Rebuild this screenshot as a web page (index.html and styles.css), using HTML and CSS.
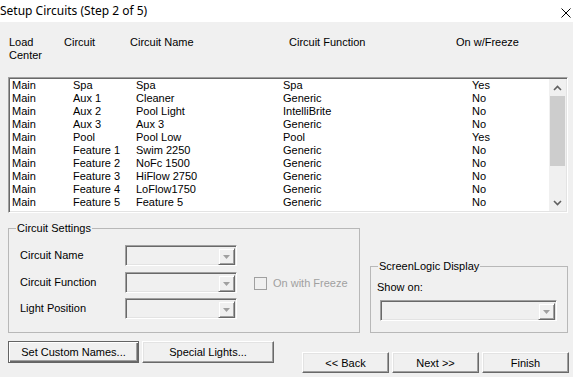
FILE: index.html
```html
<!DOCTYPE html>
<html>
<head>
<meta charset="utf-8">
<title>Setup Circuits</title>
<link rel="stylesheet" href="styles.css">
</head>
<body>
<div class="titlebar">
  <span class="title">Setup Circuits (Step 2 of 5)</span>
  <svg class="close" width="10" height="10" viewBox="0 0 10 10"><path d="M0.5 0.5 L9.5 9.5 M9.5 0.5 L0.5 9.5" stroke="#000" stroke-width="1" fill="none"/></svg>
</div>
<div class="dialog">
  <div class="headers">
    <span>Load<br>Center</span>
    <span>Circuit</span>
    <span>Circuit Name</span>
    <span>Circuit Function</span>
    <span>On w/Freeze</span>
  </div>
  <div class="listbox">
    <div class="rows">
      <div class="row"><span>Main</span><span>Spa</span><span>Spa</span><span>Spa</span><span>Yes</span></div>
      <div class="row"><span>Main</span><span>Aux 1</span><span>Cleaner</span><span>Generic</span><span>No</span></div>
      <div class="row"><span>Main</span><span>Aux 2</span><span>Pool Light</span><span>IntelliBrite</span><span>No</span></div>
      <div class="row"><span>Main</span><span>Aux 3</span><span>Aux 3</span><span>Generic</span><span>No</span></div>
      <div class="row"><span>Main</span><span>Pool</span><span>Pool Low</span><span>Pool</span><span>Yes</span></div>
      <div class="row"><span>Main</span><span>Feature 1</span><span>Swim 2250</span><span>Generic</span><span>No</span></div>
      <div class="row"><span>Main</span><span>Feature 2</span><span>NoFc 1500</span><span>Generic</span><span>No</span></div>
      <div class="row"><span>Main</span><span>Feature 3</span><span>HiFlow 2750</span><span>Generic</span><span>No</span></div>
      <div class="row"><span>Main</span><span>Feature 4</span><span>LoFlow1750</span><span>Generic</span><span>No</span></div>
      <div class="row"><span>Main</span><span>Feature 5</span><span>Feature 5</span><span>Generic</span><span>No</span></div>
      <div class="row"><span>Main</span><span>Feature 6</span><span>Feature 6</span><span>Generic</span><span>No</span></div>
    </div>
    <div class="scrollbar">
      <div class="sb-arrow"><svg width="9" height="6" viewBox="0 0 9 6"><path d="M1 5 L4.5 1.5 L8 5" stroke="#606060" stroke-width="1.6" fill="none"/></svg></div>
      <div class="sb-track"><div class="sb-thumb"></div></div>
      <div class="sb-arrow"><svg width="9" height="6" viewBox="0 0 9 6"><path d="M1 1 L4.5 4.5 L8 1" stroke="#606060" stroke-width="1.6" fill="none"/></svg></div>
    </div>
  </div>
  <div class="middle">
    <fieldset class="group settings">
      <legend>Circuit Settings</legend>
      <div class="settings-grid">
        <span class="lbl">Circuit Name</span>
        <div class="combo"><span class="combo-btn"><svg width="7" height="4" viewBox="0 0 7 4"><path d="M0 0 H7 L3.5 4 Z" fill="#a0a0a0"/></svg></span></div>
        <span></span>
        <span class="lbl">Circuit Function</span>
        <div class="combo"><span class="combo-btn"><svg width="7" height="4" viewBox="0 0 7 4"><path d="M0 0 H7 L3.5 4 Z" fill="#a0a0a0"/></svg></span></div>
        <label class="check"><span class="box"></span><span class="disabled">On with Freeze</span></label>
        <span class="lbl">Light Position</span>
        <div class="combo"><span class="combo-btn"><svg width="7" height="4" viewBox="0 0 7 4"><path d="M0 0 H7 L3.5 4 Z" fill="#a0a0a0"/></svg></span></div>
        <span></span>
      </div>
    </fieldset>
    <fieldset class="group display">
      <legend>ScreenLogic Display</legend>
      <div class="show-on">Show on:</div>
      <div class="combo wide"><span class="combo-btn"><svg width="7" height="4" viewBox="0 0 7 4"><path d="M0 0 H7 L3.5 4 Z" fill="#a0a0a0"/></svg></span></div>
    </fieldset>
  </div>
  <div class="buttons">
    <div class="btn-group left">
      <button class="btn default">Set Custom Names...</button>
      <button class="btn">Special Lights...</button>
    </div>
    <div class="btn-group right">
      <button class="btn nav">&lt;&lt; Back</button>
      <button class="btn nav">Next &gt;&gt;</button>
      <button class="btn nav">Finish</button>
    </div>
  </div>
</div>
</body>
</html>
```
FILE: styles.css
```css
* { box-sizing: border-box; }
html, body {
  margin: 0;
  padding: 0;
  width: 573px;
  height: 377px;
  overflow: hidden;
  background: #f0f0f0;
  font-family: "Liberation Sans", Arial, sans-serif;
  font-size: 11px;
  line-height: 13px;
  color: #000;
}
.titlebar {
  height: 22px;
  background: #fff;
  display: flex;
  align-items: center;
  justify-content: space-between;
  padding: 0 2px 0 0;
}
.title {
  font-family: "Noto Sans", "Open Sans", sans-serif;
  font-size: 12px;
  line-height: 16px;
  margin-top: -1px;
}
.close { margin-top: 3px; }
.dialog {
  padding: 14px 0 0 0;
}
.headers {
  display: grid;
  grid-template-columns: 55px 66px 159px 167px auto;
  padding-left: 9px;
  height: 26px;
}
.listbox {
  margin: 15px 0 0 8px;
  width: 560px;
  height: 136px;
  border-top: 1px solid #a0a0a0;
  border-left: 1px solid #a0a0a0;
  border-right: 1px solid #fff;
  border-bottom: 1px solid #fff;
  box-shadow: inset 1px 1px 0 #696969, inset -1px -1px 0 #e3e3e3;
  padding: 1px;
  display: flex;
  overflow: hidden;
}
.rows {
  flex: 1;
  background: #fff;
  overflow: hidden;
  padding-left: 2px;
}
.row {
  display: grid;
  grid-template-columns: 61px 63px 147px 189px auto;
  height: 13px;
  white-space: nowrap;
}
.scrollbar {
  width: 17px;
  background: #f0f0f0;
  display: flex;
  flex-direction: column;
}
.sb-arrow {
  height: 17px;
  display: flex;
  align-items: center;
  justify-content: center;
}
.sb-track {
  flex: 1;
  padding: 0 1px;
}
.sb-thumb {
  height: 70px;
  background: #cdcdcd;
}
.middle {
  display: flex;
  align-items: flex-end;
  margin-top: 9px;
}
.group {
  margin: 0;
  border: 1px solid #b8b8b8;
  padding: 0;
  min-width: 0;
}
.group legend {
  padding: 0 1px;
  line-height: 13px;
}
.settings {
  margin-left: 8px;
  width: 352px;
  padding: 10px 0 13px 11px;
}
.settings legend { margin-left: -4px; }
.settings-grid {
  display: grid;
  grid-template-columns: 105px 112px auto;
  grid-auto-rows: 21px;
  row-gap: 5.5px;
  align-items: center;
}
.combo {
  width: 112px;
  height: 21px;
  border-top: 1px solid #a0a0a0;
  border-left: 1px solid #a0a0a0;
  border-right: 1px solid #fff;
  border-bottom: 1px solid #fff;
  box-shadow: inset 1px 1px 0 #696969, inset -1px -1px 0 #e3e3e3;
  padding: 2px 1px 1px 2px;
  display: flex;
  justify-content: flex-end;
  background: #f0f0f0;
}
.combo.wide { width: 177px; margin-left: 9px; }
.combo-btn {
  width: 17px;
  height: 17px;
  border-top: 1px solid #f0f0f0;
  border-left: 1px solid #f0f0f0;
  border-right: 1px solid #696969;
  border-bottom: 1px solid #696969;
  box-shadow: inset 1px 1px 0 #fff, inset -1px -1px 0 #a0a0a0;
  display: flex;
  align-items: center;
  justify-content: center;
  padding-top: 1px;
}
.check {
  display: flex;
  align-items: center;
  margin-left: 17px;
  margin-top: 2px;
}
.box {
  width: 13px;
  height: 13px;
  border: 1px solid #a0a0a0;
  background: #f0f0f0;
  margin-right: 6px;
}
.disabled { color: #a0a0a0; }
.display {
  margin-left: 10px;
  width: 198px;
  padding: 8px 0 11px 0;
}
.display legend { margin-left: 7px; }
.show-on {
  padding-left: 6px;
  height: 19px;
}
.buttons {
  display: flex;
  align-items: flex-start;
  margin-top: 8px;
}
.btn-group {
  display: flex;
  gap: 3px;
}
.left { margin-left: 8px; }
.right { margin-left: 28px; margin-top: 11px; }
.btn {
  font-family: "Liberation Sans", Arial, sans-serif;
  font-size: 11px;
  color: #000;
  height: 22px;
  width: 132px;
  background: #f0f0f0;
  border-top: 1px solid #fff;
  border-left: 1px solid #fff;
  border-right: 1px solid #696969;
  border-bottom: 1px solid #696969;
  box-shadow: inset -1px -1px 0 #a0a0a0, inset 1px 1px 0 #e3e3e3;
  padding: 0;
  margin: 0;
}
.btn.default {
  width: 131px;
  border: 1px solid #646464;
  box-shadow: inset 1px 1px 0 #fff, inset -1px -1px 0 #696969, inset -2px -2px 0 #a0a0a0;
}
.btn.nav { width: 87px; height: 21px; }
```
